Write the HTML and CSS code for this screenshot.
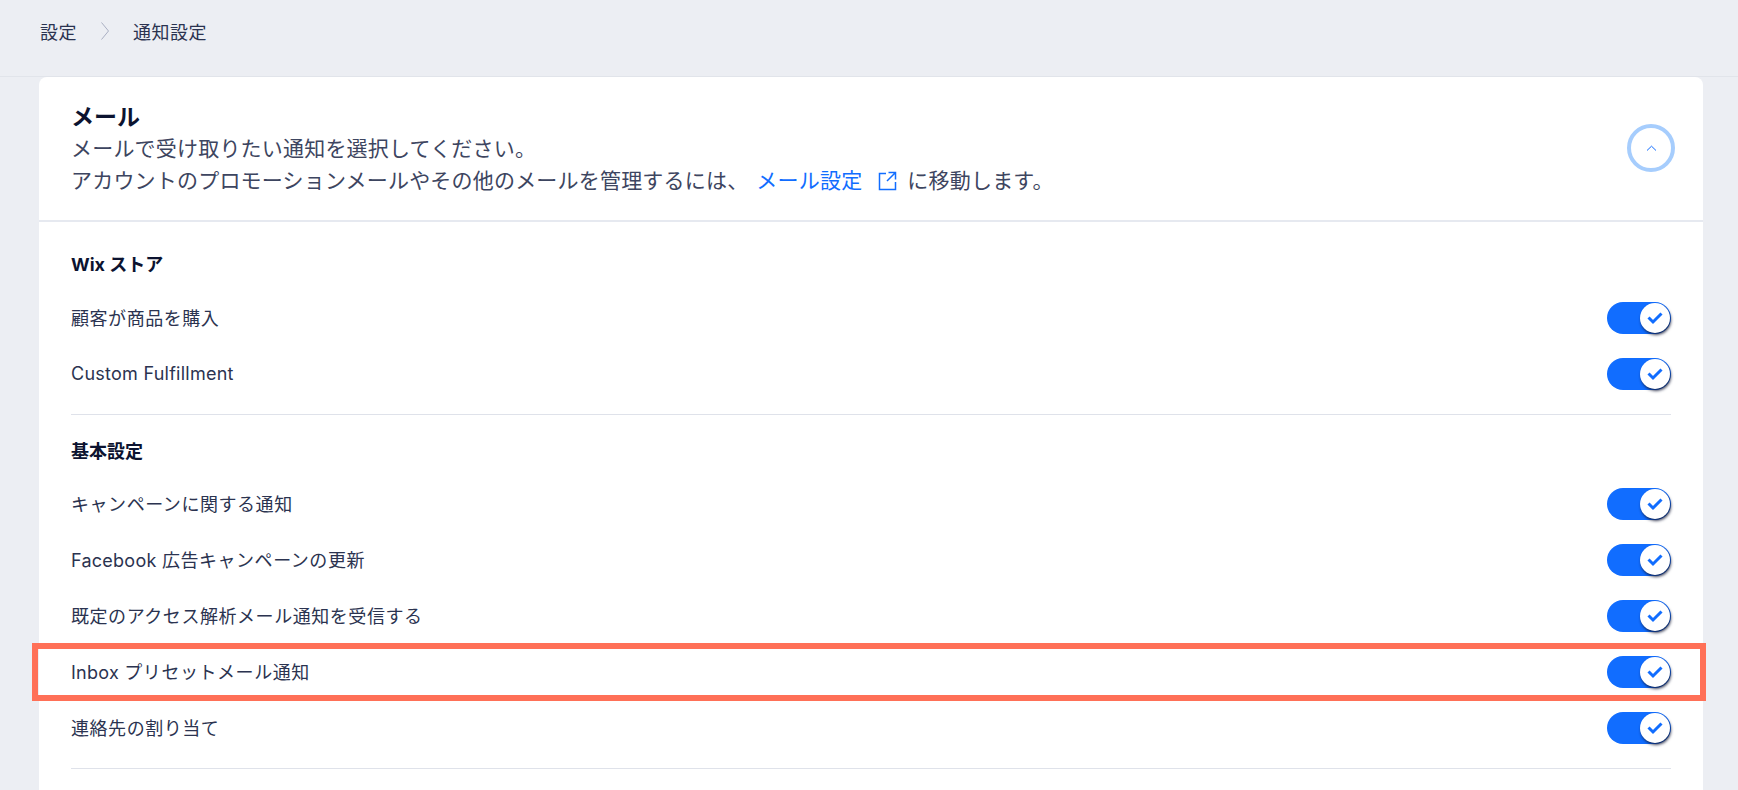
FILE: index.html
```html
<!DOCTYPE html>
<html lang="ja">
<head>
<meta charset="utf-8">
<title>通知設定</title>
<link rel="stylesheet" href="styles.css">
</head>
<body>
<nav class="crumbs">
  <span class="crumb">設定</span>
  <svg class="crumb-sep" width="8" height="18" viewBox="0 0 8 18"><path d="M.5 .5 7.500 9 .5 17.500" fill="none" stroke="#a9afc2" stroke-width="1"/></svg>
  <span class="crumb">通知設定</span>
</nav>
<main class="card">
  <header class="card-head">
    <div class="head-text">
      <h1>メール</h1>
      <p>メールで受け取りたい通知を選択してください。</p>
      <p>アカウントのプロモーションメールやその他のメールを管理するには、<a class="link" href="#">メール設定<svg class="ext" width="20" height="20" viewBox="0 0 20 20"><path d="M9 2.500H2.500V18.500H18.500V11M11.500 1.500H18.500V8.500M18.500 1.500 10 10" fill="none" stroke="#116dff" stroke-width="1.500"/></svg></a>に移動します。</p>
    </div>
    <button class="collapse" aria-label="閉じる"><svg width="11" height="7" viewBox="0 0 11 7"><path d="M1 5.500 5.500 1.200 10 5.500" fill="none" stroke="#116dff" stroke-width="1"/></svg></button>
  </header>

  <section class="group group-first">
    <h2>Wix ストア</h2>
    <div class="row"><span class="label">顧客が商品を購入</span><span class="toggle"><span class="knob"><svg width="20" height="16" viewBox="0 0 20 16"><path d="M3.500 7.500 8 12 16.500 3.500" fill="none" stroke="#116dff" stroke-width="3"/></svg></span></span></div>
    <div class="row"><span class="label"><span class="lat">Custom Fulfillment</span></span><span class="toggle"><span class="knob"><svg width="20" height="16" viewBox="0 0 20 16"><path d="M3.500 7.500 8 12 16.500 3.500" fill="none" stroke="#116dff" stroke-width="3"/></svg></span></span></div>
  </section>

  <section class="group">
    <h2>基本設定</h2>
    <div class="row"><span class="label">キャンペーンに関する通知</span><span class="toggle"><span class="knob"><svg width="20" height="16" viewBox="0 0 20 16"><path d="M3.500 7.500 8 12 16.500 3.500" fill="none" stroke="#116dff" stroke-width="3"/></svg></span></span></div>
    <div class="row"><span class="label"><span class="lat">Facebook </span>広告キャンペーンの更新</span><span class="toggle"><span class="knob"><svg width="20" height="16" viewBox="0 0 20 16"><path d="M3.500 7.500 8 12 16.500 3.500" fill="none" stroke="#116dff" stroke-width="3"/></svg></span></span></div>
    <div class="row"><span class="label">既定のアクセス解析メール通知を受信する</span><span class="toggle"><span class="knob"><svg width="20" height="16" viewBox="0 0 20 16"><path d="M3.500 7.500 8 12 16.500 3.500" fill="none" stroke="#116dff" stroke-width="3"/></svg></span></span></div>
    <div class="row row-marked"><span class="label"><span class="lat">Inbox </span>プリセットメール通知</span><span class="toggle"><span class="knob"><svg width="20" height="16" viewBox="0 0 20 16"><path d="M3.500 7.500 8 12 16.500 3.500" fill="none" stroke="#116dff" stroke-width="3"/></svg></span></span></div>
    <div class="row"><span class="label">連絡先の割り当て</span><span class="toggle"><span class="knob"><svg width="20" height="16" viewBox="0 0 20 16"><path d="M3.500 7.500 8 12 16.500 3.500" fill="none" stroke="#116dff" stroke-width="3"/></svg></span></span></div>
  </section>
</main>
</body>
</html>
```
FILE: styles.css
```css
* { box-sizing: border-box; }
html, body { height: 100%; }
body {
  margin: 0;
  height: 790px;
  overflow: hidden;
  background: #eceef3;
  color: #162d3d;
  font-family: Inter, "Noto Sans CJK JP", sans-serif;
}
.crumbs {
  height: 77px;
  padding: 0 0 15px 40px;
  display: flex;
  align-items: center;
  gap: 24px;
  font-size: 18px;
  color: #2b3350;
  border-bottom: 1px solid #e1e4ea;
}
.crumb { letter-spacing: .5px; }
.card {
  margin: 0 35px 0 39px;
  background: #fff;
  border-radius: 8px 8px 0 0;
  height: 713px;
}
.card-head {
  height: 145px;
  padding: 24px 28px 0 32px;
  display: flex;
  justify-content: space-between;
  border-bottom: 2px solid #e6e9f0;
}
.card-head h1 {
  margin: 0;
  font-size: 23px;
  line-height: 32px;
  font-weight: 700;
  color: #0c1330;
}
.card-head p {
  margin: 0;
  font-size: 21px;
  line-height: 32px;
  letter-spacing: .2px;
  color: #3d4560;
}
.link { color: #116dff; text-decoration: none; margin: 0 10px 0 8px; }
.ext { vertical-align: -3px; margin-left: 15px; }
.collapse {
  width: 48px;
  height: 48px;
  margin-top: 23px;
  padding: 0 0 0 1px;
  border: 4px solid #a6cdfd;
  border-radius: 50%;
  background: #fff;
  display: flex;
  align-items: center;
  justify-content: center;
}
.group {
  margin: 0 32px 0 32px;
  padding-top: 27px;
  padding-bottom: 12px;
  border-bottom: 1px solid #dfe2ea;
}
.group-first { padding-top: 33px; }
.group h2 {
  margin: 0 0 14px;
  font-size: 18px;
  line-height: 20px;
  font-weight: 700;
  color: #0c1330;
}
.group-first h2 { margin-bottom: 15px; }
.row {
  height: 56px;
  display: flex;
  align-items: center;
  justify-content: space-between;
  font-size: 18px;
  color: #2b3350;
  position: relative;
}
.label { letter-spacing: .55px; padding-bottom: 2px; }
.lat { letter-spacing: .25px; }
.row-marked::after {
  content: "";
  position: absolute;
  left: -39px;
  right: -35px;
  top: -1px;
  bottom: -1px;
  border: 6px solid #ff7057;
  pointer-events: none;
}
.toggle {
  width: 64px;
  height: 32px;
  background: #116dff;
  border-radius: 16px;
  position: relative;
}
.knob {
  position: absolute;
  right: 1px;
  top: 1px;
  width: 30px;
  height: 30px;
  border-radius: 50%;
  background: #fff;
  box-shadow: 1px 2px 3px rgba(12, 19, 48, .8);
  display: flex;
  align-items: center;
  justify-content: center;
}
```
